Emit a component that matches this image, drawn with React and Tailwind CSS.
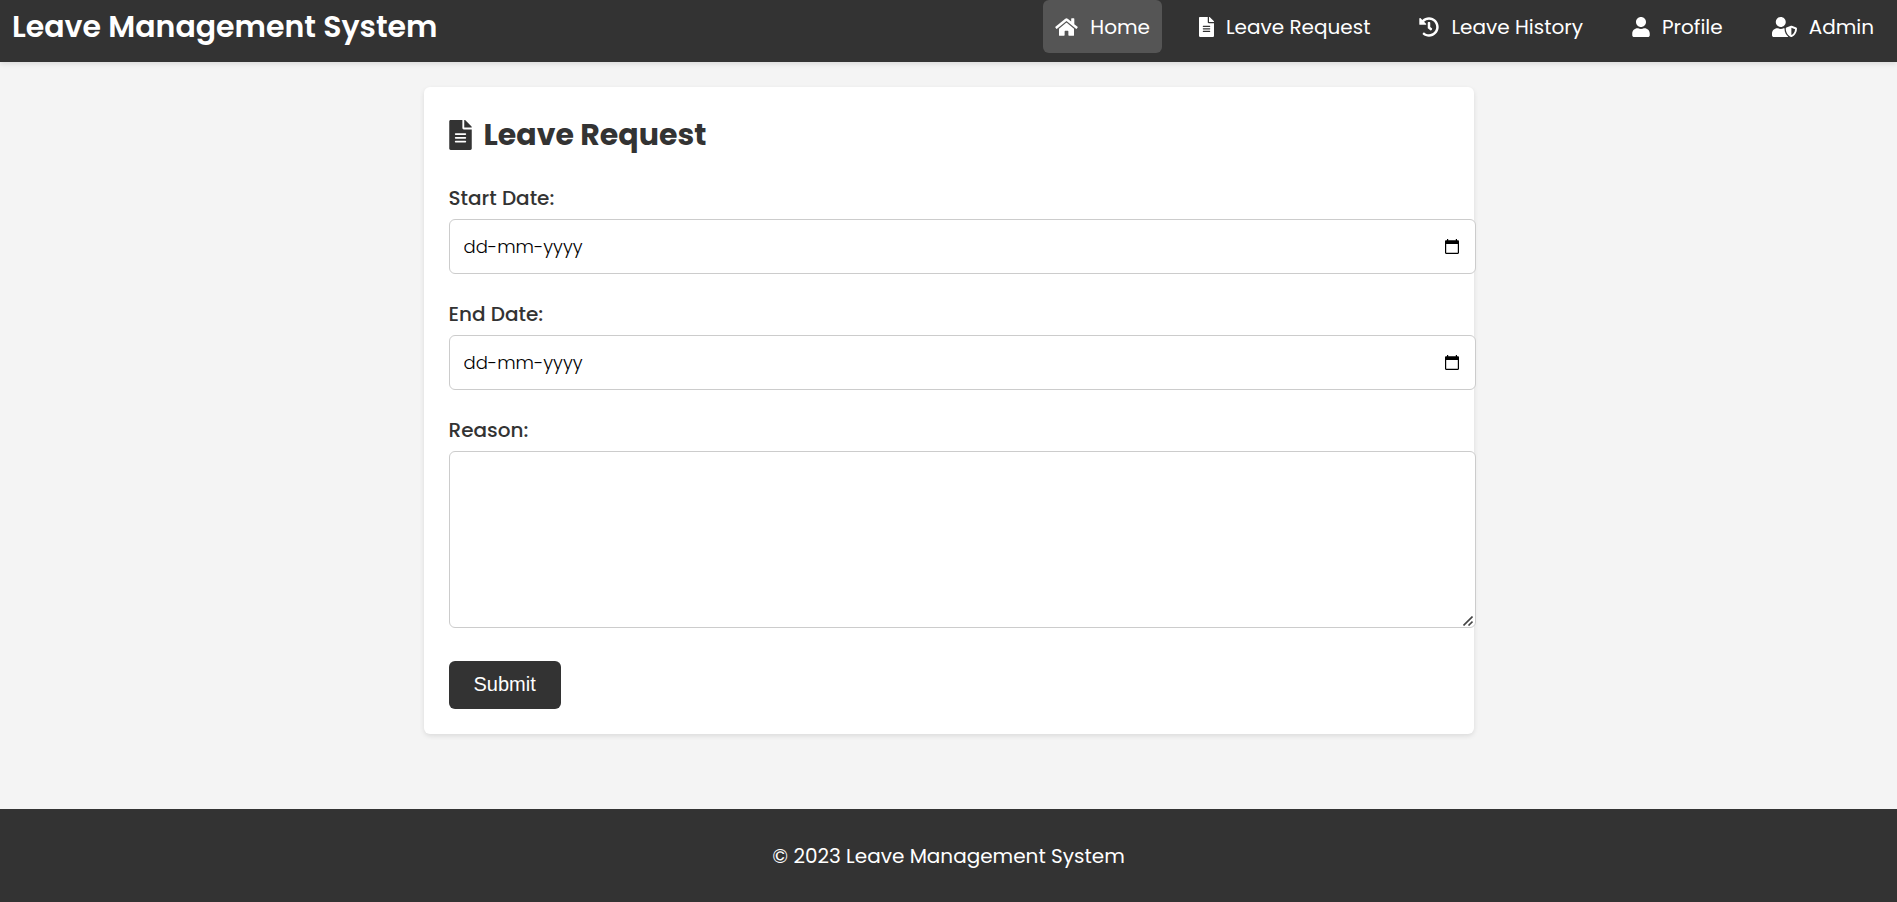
import { FaHome, FaFileAlt, FaHistory, FaUser, FaUserShield } from "react-icons/fa";

const links = [
  { label: "Home", Icon: FaHome, size: "w-[23px]", active: true },
  { label: "Leave Request", Icon: FaFileAlt, size: "w-[15px]" },
  { label: "Leave History", Icon: FaHistory, size: "w-5" },
  { label: "Profile", Icon: FaUser, size: "w-[18px]" },
  { label: "Admin", Icon: FaUserShield, size: "w-[25px]" },
];

function CalendarIcon() {
  return (
    <svg viewBox="0 0 14 16" className="h-4 w-[14px]" aria-hidden="true">
      <path
        fillRule="evenodd"
        d="M2 0h1.200v1.300h7.600V0H12v1.300h.8c.7 0 1.200.5 1.200 1.200v11.300c0 .7-.5 1.200-1.200 1.200H1.200C.5 15 0 14.500 0 13.800V2.500c0-.7.5-1.200 1.200-1.200H2zM1.200 5v8.800h11.600V5z"
      />
    </svg>
  );
}

function DateField({ id, label }) {
  return (
    <div className="mb-[25px]">
      <label htmlFor={id} className="mb-1.5 block text-[20px] leading-[30px] font-medium">
        {label}
      </label>
      <div className="flex h-[55px] w-[calc(100%+27px)] items-center rounded-md border border-[#ccc] bg-white pr-4 pl-[14px]">
        <input
          id={id}
          type="text"
          placeholder="dd-mm-yyyy"
          className="min-w-0 flex-1 bg-transparent text-[18px] font-light text-black outline-none placeholder:text-black"
        />
        <button type="button" aria-label={`Choose ${label}`}>
          <CalendarIcon />
        </button>
      </div>
    </div>
  );
}

export default function App() {
  return (
    <div className="flex min-h-screen flex-col bg-[#f4f4f4] font-[Poppins,Inter,sans-serif] text-[#333]">
      <header className="flex h-[62px] items-start justify-between bg-[#333] pr-[11px] pl-3 text-white shadow-[0_2px_5px_rgba(0,0,0,0.1)]">
        <h1 className="text-[30px] leading-[53px] font-semibold whitespace-nowrap">
          Leave Management System
        </h1>
        <nav>
          <ul className="flex gap-[25px]">
            {links.map(({ label, Icon, size, active }) => (
              <li key={label}>
                <a
                  href="#"
                  className={`flex h-[53px] items-center gap-3 rounded-md px-3 text-[20px] whitespace-nowrap ${active ? "bg-[#555]" : ""}`}
                >
                  <Icon className={`h-5 ${size}`} />
                  {label}
                </a>
              </li>
            ))}
          </ul>
        </nav>
      </header>

      <main className="mx-auto mt-[25px] mb-[75px] w-full max-w-[1050px] rounded-md bg-white p-[25px] shadow-[0_2px_5px_rgba(0,0,0,0.1)]">
        <h2 className="mb-[26px] flex items-center gap-3 text-[30px] leading-[45px] font-bold">
          <FaFileAlt className="h-[30px] w-[23px]" />
          Leave Request
        </h2>
        <form>
          <DateField id="start-date" label="Start Date:" />
          <DateField id="end-date" label="End Date:" />
          <label htmlFor="reason" className="mb-1.5 block text-[20px] leading-[30px] font-medium">
            Reason:
          </label>
          <div className="relative mb-[33px] w-[calc(100%+27px)]">
            <textarea
              id="reason"
              className="block h-[177px] w-full resize-none rounded-md border border-[#ccc] bg-white p-3 text-[18px] outline-none"
            />
            <svg
              viewBox="0 0 10 10"
              className="pointer-events-none absolute right-[3px] bottom-0.5 size-2.5 stroke-[#444]"
              strokeWidth="1.6"
              aria-hidden="true"
            >
              <path d="M.5 9.500l9-9M5.500 9.500l4-4" />
            </svg>
          </div>
          <button
            type="submit"
            className="block h-12 rounded-md bg-[#333] px-[25px] pb-0.5 font-['Liberation_Sans',sans-serif] text-[20px] text-white"
          >
            Submit
          </button>
        </form>
      </main>

      <footer className="mt-auto bg-[#333] pt-[33px] pb-[31px] text-center text-[20px] leading-[29px] text-white">
        <p>© 2023 Leave Management System</p>
      </footer>
    </div>
  );
}
